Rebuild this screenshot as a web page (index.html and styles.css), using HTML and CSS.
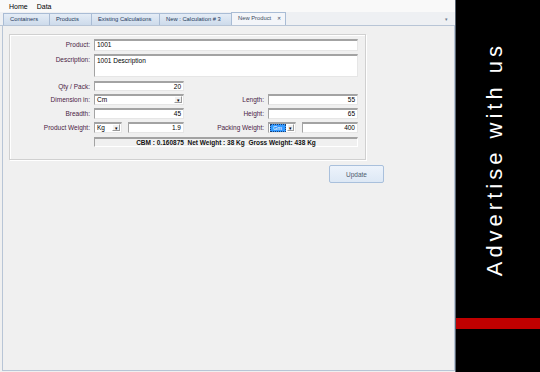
FILE: index.html
```html
<!DOCTYPE html>
<html lang="en">
<head>
    <meta charset="UTF-8">
    <title>New Product</title>
    <link rel="stylesheet" href="styles.css">
</head>
<body>
    <div class="main">
        <div class="menu">
            <span>Home</span>
            <span>Data</span>
        </div>
        <div class="tabbar">
            <div class="tab">Containers</div>
            <div class="tab">Products</div>
            <div class="tab">Existing Calculations</div>
            <div class="tab">New : Calculation # 3</div>
            <div class="tab active">New Product <span class="close">✕</span></div>
            <div class="tab-arrow">▾</div>
        </div>
        <div class="panel">
            <div class="group">
                <label class="lbl r1">Product:</label>
                <div class="field wide r1">1001</div>

                <label class="lbl r2">Description:</label>
                <div class="field wide area r2">1001 Description</div>

                <label class="lbl r3">Qty / Pack:</label>
                <div class="field num r3">20</div>

                <label class="lbl r4">Dimension in:</label>
                <div class="select r4"><span class="val">Cm</span><span class="drop">▾</span></div>
                <label class="lbl r4 c3">Length:</label>
                <div class="field num r4 c4">55</div>

                <label class="lbl r5">Breadth:</label>
                <div class="field num r5">45</div>
                <label class="lbl r5 c3">Height:</label>
                <div class="field num r5 c4">65</div>

                <label class="lbl r6">Product Weight:</label>
                <div class="pair r6">
                    <div class="select small"><span class="val">Kg</span><span class="drop">▾</span></div>
                    <div class="field num">1.9</div>
                </div>
                <label class="lbl r6 c3">Packing Weight:</label>
                <div class="pair r6 c4">
                    <div class="select small"><span class="val sel">Gm</span><span class="drop">▾</span></div>
                    <div class="field num">400</div>
                </div>

                <div class="summary r7">CBM : 0.160875&nbsp; Net Weight : 38 Kg&nbsp; Gross Weight: 438 Kg</div>
            </div>
            <div class="actions">
                <button class="btn">Update</button>
            </div>
        </div>
    </div>
    <div class="ad">
        <div class="ad-text"><span>Advertise with us</span></div>
        <div class="ad-bar"></div>
        <div class="ad-rest"></div>
    </div>
</body>
</html>
```

FILE: styles.css
```css
body, html {
    margin: 0;
    padding: 0;
    width: 540px;
    height: 372px;
    overflow: hidden;
    font-family: "Liberation Sans", Arial, sans-serif;
}

body {
    display: flex;
    background: #f0f0f0;
}

.main {
    width: 456px;
    display: flex;
    flex-direction: column;
}

.menu {
    height: 12px;
    background: #f9f9f9;
    display: flex;
    align-items: center;
    gap: 9px;
    padding-left: 9px;
    font-size: 7px;
    color: #000;
}

.tabbar {
    height: 13px;
    display: flex;
    align-items: flex-end;
    padding-left: 3px;
    background: #eef0f3;
    border-bottom: 1px solid #b8c5d6;
}

.tab {
    height: 11px;
    padding: 0 6px;
    font-size: 5.8px;
    line-height: 11px;
    color: #1e395b;
    background: linear-gradient(#e4ecf6, #cddbeb);
    border: 1px solid #a9bcd5;
    border-bottom: none;
    margin-right: -1px;
    white-space: nowrap;
}

.tab:nth-child(1) { width: 33px; }
.tab:nth-child(2) { width: 29px; }
.tab:nth-child(3) { width: 55px; }
.tab:nth-child(4) { width: 59px; }

.tab.active {
    background: #f3f5f9;
    color: #3a4b62;
    height: 12px;
    width: 41px;
}

.close {
    font-size: 5px;
    margin-left: 4px;
}

.tab-arrow {
    margin-left: auto;
    margin-right: 7px;
    margin-bottom: 3px;
    font-size: 5px;
    color: #6d7c90;
}

.panel {
    flex: 1;
    margin: 0 0 1px 2px;
    width: 453px;
    box-sizing: border-box;
    border: 1px solid #b8c5d6;
    border-top: none;
    background: #f0f0f0;
    padding: 8px 0 0 6px;
}

.group {
    width: 357px;
    height: 126px;
    box-sizing: border-box;
    border: 1px solid #d0d0d0;
    box-shadow: inset 1px 1px 0 #fff, 1px 1px 0 #fff;
    padding: 4px 0 0 0;
    display: grid;
    grid-template-columns: 80px 90px 76px 90px;
    grid-template-rows: 12px 23px 11px 11px 11px 11px 11px;
    column-gap: 4px;
    row-gap: 3px;
}

.r1 { grid-row: 1; }
.r2 { grid-row: 2; }
.r3 { grid-row: 3; margin-top: 1px; }
.r4 { grid-row: 4; }
.r5 { grid-row: 5; }
.r6 { grid-row: 6; }
.r7 { grid-row: 7; margin-top: 1px; }
.c3 { grid-column: 3; }
.c4 { grid-column: 4; }

.lbl {
    grid-column: 1;
    text-align: right;
    font-size: 6.5px;
    line-height: 11px;
    color: #4a2344;
    white-space: nowrap;
}

.lbl.c3 { grid-column: 3; }

.field {
    grid-column: 2;
    box-sizing: border-box;
    background: #fff;
    border-top: 2px solid #a3a3a3;
    border-left: 1px solid #a3a3a3;
    border-right: 1px solid #e6e6e6;
    border-bottom: 1px solid #e6e6e6;
    font-size: 6.5px;
    line-height: 8px;
    padding: 0 2px;
    color: #000;
    white-space: nowrap;
}

.field.c4 { grid-column: 4; }

.field.wide { grid-column: 2 / 5; }

.field.area { padding-top: 1px; }

.field.num { text-align: right; }

.select {
    grid-column: 2;
    box-sizing: border-box;
    background: #fff;
    border-top: 2px solid #a3a3a3;
    border-left: 1px solid #a3a3a3;
    border-right: 1px solid #e6e6e6;
    border-bottom: 1px solid #e6e6e6;
    display: flex;
    align-items: stretch;
    font-size: 6.5px;
    line-height: 8px;
}

.select .val {
    flex: 1;
    padding: 0 2px;
}

.select .val.sel {
    flex: none;
    width: 16px;
    margin: 0 1px;
    background: #3399ff;
    color: #fff;
    border: 1px dotted #1a3f73;
    box-sizing: border-box;
    line-height: 6px;
    font-size: 5.5px;
}

.select .drop {
    width: 8px;
    border: 1px solid #9a9a9a;
    border-top-color: #fff;
    border-left-color: #fff;
    background: #f0f0f0;
    box-sizing: border-box;
    font-size: 5px;
    line-height: 6px;
    text-align: center;
    margin: 0 1px 1px 0;
}

.pair {
    grid-column: 2;
    display: flex;
    gap: 6px;
}

.pair.c4 { grid-column: 4; }

.pair .select.small {
    width: 28px;
    flex: none;
}

.pair .field {
    flex: 1;
}

.summary {
    grid-column: 2 / 5;
    box-sizing: border-box;
    background: #f0f0f0;
    border-top: 2px solid #a3a3a3;
    border-left: 1px solid #a3a3a3;
    border-right: 1px solid #fff;
    border-bottom: 1px solid #fff;
    font-size: 6.5px;
    line-height: 8px;
    font-weight: bold;
    text-align: center;
    color: #111;
    white-space: nowrap;
}

.actions {
    width: 375px;
    display: flex;
    justify-content: flex-end;
    padding-top: 5px;
}

.btn {
    width: 55px;
    height: 18px;
    padding: 0;
    font-family: "Liberation Sans", Arial, sans-serif;
    font-size: 6.5px;
    color: #4d5b6e;
    background: linear-gradient(#edf3fb, #dde8f5);
    border: 1px solid #a9c0dc;
    border-radius: 2px;
}

.ad {
    width: 84px;
    background: #000;
    display: flex;
    flex-direction: column;
    border-left: 1px solid #5a6470;
}

.ad-text {
    height: 318px;
    display: flex;
    align-items: center;
    justify-content: center;
    padding-right: 6px;
}

.ad-text span {
    writing-mode: vertical-rl;
    transform: rotate(180deg);
    color: #fff;
    font-family: "Liberation Sans", Arial, sans-serif;
    font-size: 22px;
    letter-spacing: 4px;
    white-space: nowrap;
}

.ad-bar {
    height: 11px;
    background: #c00000;
}

.ad-rest {
    flex: 1;
}
```
